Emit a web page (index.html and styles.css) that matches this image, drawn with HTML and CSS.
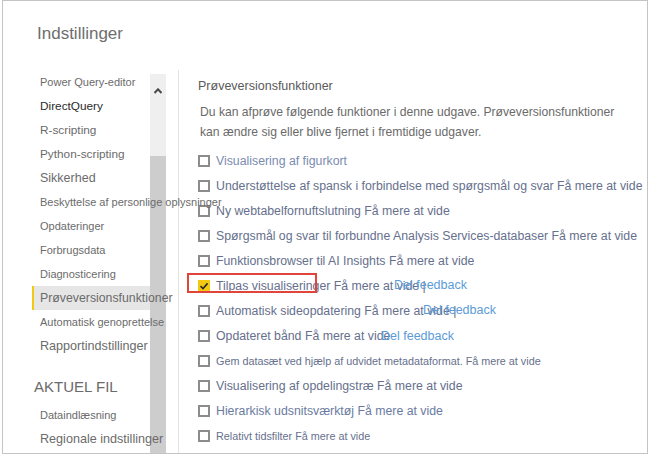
FILE: index.html
```html
<!DOCTYPE html>
<html lang="da">
<head>
<meta charset="utf-8">
<title>Indstillinger</title>
<link rel="stylesheet" href="styles.css">
</head>
<body>
<div class="frame">
  <h1 class="title">Indstillinger</h1>
  <div class="main">
    <div class="sidebar">
      <nav class="nav">
        <div class="item s11">Power Query-editor</div>
        <div class="item s12 dark">DirectQuery</div>
        <div class="item s12">R-scripting</div>
        <div class="item s12">Python-scripting</div>
        <div class="item s125">Sikkerhed</div>
        <div class="item s11">Beskyttelse af personlige oplysninger</div>
        <div class="item s11">Opdateringer</div>
        <div class="item s11">Forbrugsdata</div>
        <div class="item s11">Diagnosticering</div>
        <div class="item s123 selected">Prøveversionsfunktioner</div>
        <div class="item s11">Automatisk genoprettelse</div>
        <div class="item s126">Rapportindstillinger</div>
        <div class="section">AKTUEL FIL</div>
        <div class="item s11">Dataindlæsning</div>
        <div class="item s126">Regionale indstillinger</div>
      </nav>
      <div class="scrollbar">
        <div class="arrow"><svg width="8" height="6" viewBox="0 0 8 6"><path d="M0.5 5 L4 1.3 L7.5 5" fill="none" stroke="#4a4a4a" stroke-width="2"/></svg></div>
        <div class="thumb"></div>
      </div>
    </div>
    <section class="content">
      <h2 class="heading">Prøveversionsfunktioner</h2>
      <p class="desc">Du kan afprøve følgende funktioner i denne udgave. Prøveversionsfunktioner<br>kan ændre sig eller blive fjernet i fremtidige udgaver.</p>
      <ul class="list">
        <li class="row light"><span class="box"></span>Visualisering af figurkort</li>
        <li class="row"><span class="box"></span>Understøttelse af spansk i forbindelse med spørgsmål og svar Få mere at vide</li>
        <li class="row"><span class="box"></span>Ny webtabelfornuftslutning Få mere at vide</li>
        <li class="row"><span class="box"></span>Spørgsmål og svar til forbundne Analysis Services-databaser Få mere at vide</li>
        <li class="row"><span class="box"></span>Funktionsbrowser til AI Insights Få mere at vide</li>
        <li class="row"><span class="box checked"><svg width="12" height="12" viewBox="0 0 12 12"><path d="M2.5 6.2 L5 8.6 L9.6 3.4" fill="none" stroke="#2b2b2b" stroke-width="1.6"/></svg></span>Tilpas visualiseringer Få mere at vide |<span class="feedback fb1">Del feedback</span><span class="highlight"></span></li>
        <li class="row"><span class="box"></span>Automatisk sideopdatering Få mere at vide |<span class="feedback fb2">Del feedback</span></li>
        <li class="row"><span class="box"></span>Opdateret bånd Få mere at vide<span class="feedback fb3">Del feedback</span></li>
        <li class="row small"><span class="box"></span>Gem datasæt ved hjælp af udvidet metadataformat. Få mere at vide</li>
        <li class="row"><span class="box"></span>Visualisering af opdelingstræ Få mere at vide</li>
        <li class="row bluish"><span class="box"></span>Hierarkisk udsnitsværktøj Få mere at vide</li>
        <li class="row small"><span class="box"></span>Relativt tidsfilter Få mere at vide</li>
      </ul>
    </section>
  </div>
</div>
</body>
</html>
```
FILE: styles.css
```css
html, body {
  margin: 0;
  padding: 0;
  background: #ffffff;
}
body {
  font-family: "Liberation Sans", Arial, sans-serif;
}
.frame {
  margin-left: 2px;
  width: 646px;
  height: 454px;
  border: 1px solid #c4c4c4;
  box-sizing: border-box;
  overflow: hidden;
  background: #fff;
}
.title {
  margin: 0;
  padding: 23px 0 0 34px;
  height: 45px;
  box-sizing: border-box;
  font-size: 17px;
  line-height: 20px;
  font-weight: normal;
  color: #6e6e6e;
}
.main {
  display: flex;
  height: 408px;
  margin-top: 24px;
}
.sidebar {
  display: flex;
  width: 175px;
  flex: none;
}
.nav {
  position: relative;
  z-index: 1;
  width: 147px;
  flex: none;
  padding-left: 29px;
  box-sizing: border-box;
}
.item {
  height: 24px;
  line-height: 24px;
  padding-left: 6px;
  border-left: 2px solid transparent;
  white-space: nowrap;
  color: #6b6b6b;
}
.item.dark { color: #2b2b2b; }
.item.selected {
  background: #e6e6e6;
  border-left-color: #f2c811;
}
.s11 { font-size: 11px; }
.s12 { font-size: 11.8px; }
.s123 { font-size: 12.3px; }
.s125 { font-size: 12.5px; }
.s126 { font-size: 12.6px; }
.section {
  margin-top: 14px;
  height: 31px;
  line-height: 30px;
  padding-left: 2px;
  font-size: 15px;
  color: #6b6b6b;
}
.scrollbar {
  width: 16px;
  flex: none;
  margin-top: 4px;
  background: #efefef;
  display: flex;
  flex-direction: column;
}
.arrow {
  height: 82px;
  display: flex;
  justify-content: center;
  padding-top: 14px;
  box-sizing: border-box;
}
.thumb {
  flex: 1;
  background: #cdcdcd;
}
.content {
  flex: 1;
  border-left: 1px solid #e3e3e3;
  padding-left: 19px;
  white-space: nowrap;
}
.heading {
  margin: 6px 0 0 0;
  font-size: 12.5px;
  line-height: 20px;
  font-weight: normal;
  color: #5a5a5a;
}
.desc {
  margin: 6px 0 0 2px;
  font-size: 12.15px;
  line-height: 20px;
  color: #6a6a6a;
}
.list {
  list-style: none;
  margin: 6px 0 0 0;
  padding: 0;
}
.row {
  position: relative;
  height: 25px;
  display: flex;
  align-items: center;
  font-size: 12.3px;
  color: #66708d;
}
.row.light { color: #7b8bb0; }
.row.bluish { color: #6a7ba1; }
.row.small { font-size: 10.8px; }
.box {
  width: 12px;
  height: 12px;
  flex: none;
  box-sizing: border-box;
  border: 2px solid #8c8c8c;
  margin-right: 6px;
}
.box.checked {
  border: none;
  background: #f2c811;
}
.box svg { display: block; }
.feedback {
  position: absolute;
  top: 5px;
  color: #5b9bd8;
  font-size: 12.5px;
  line-height: 15px;
}
.fb1 { left: 196px; }
.fb2 { left: 225px; }
.fb3 { left: 183px; top: 6px; }
.highlight {
  position: absolute;
  left: -11px;
  top: 0;
  width: 130px;
  height: 20px;
  border: 2px solid #e0453c;
  box-sizing: border-box;
}
```
